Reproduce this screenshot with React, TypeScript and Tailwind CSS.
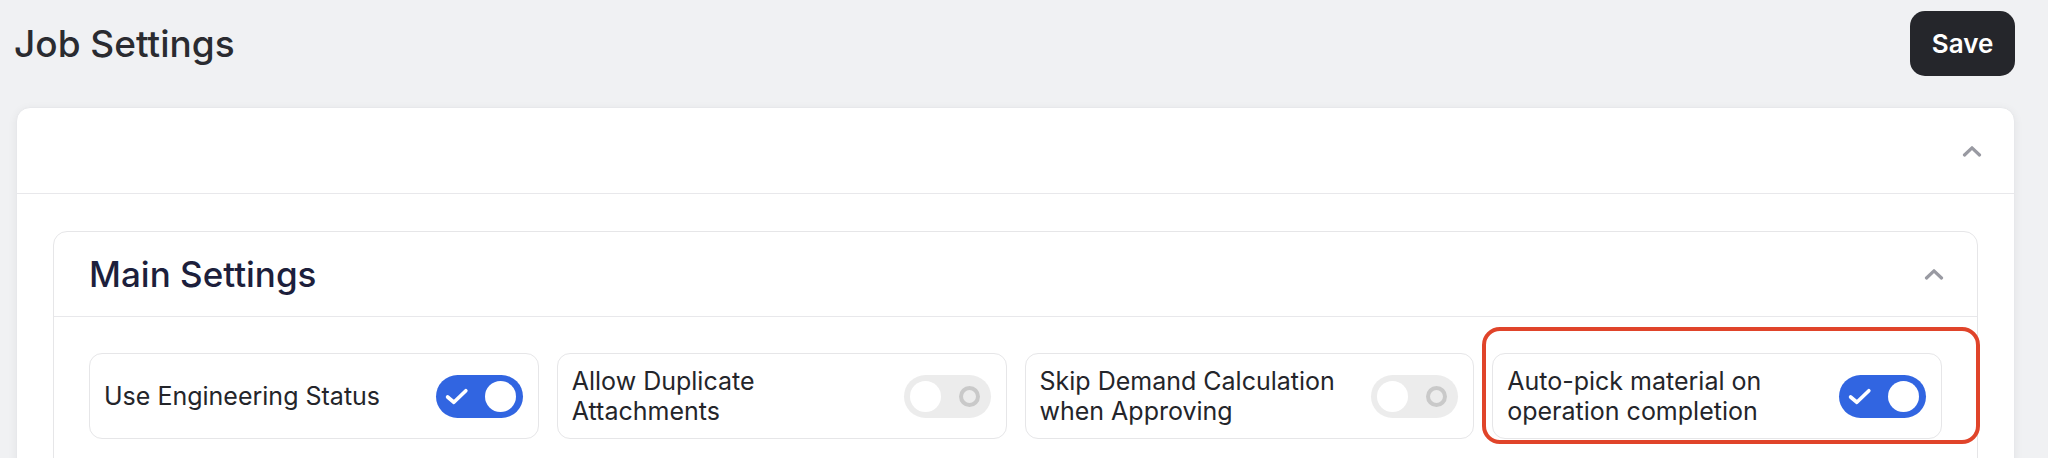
import React from 'react';

interface SettingToggle {
  label: string;
  enabled: boolean;
  highlighted?: boolean;
}

const settings: SettingToggle[] = [
  { label: 'Use Engineering Status', enabled: true },
  { label: 'Allow Duplicate Attachments', enabled: false },
  { label: 'Skip Demand Calculation when Approving', enabled: false },
  { label: 'Auto-pick material on operation completion', enabled: true, highlighted: true },
];

const ChevronUp: React.FC<{ className?: string }> = ({ className }) => (
  <svg viewBox="0 0 20 12" className={className} fill="none">
    <path d="M2.5 10 L10 2.8 L17.5 10" stroke="currentColor" strokeWidth="3.2" strokeLinecap="round" strokeLinejoin="round" />
  </svg>
);

const Switch: React.FC<{ on: boolean }> = ({ on }) => {
  if (on) {
    return (
      <div className="relative w-[87px] h-[43px] shrink-0 rounded-full bg-[#3165e1]">
        <svg viewBox="0 0 24 16" className="absolute left-[9px] top-[13px] w-[25px] h-[17px]" fill="none">
          <path d="M2.5 8.5 L8.5 13.5 L20 2.5" stroke="white" strokeWidth="3.5" strokeLinecap="round" strokeLinejoin="round" />
        </svg>
        <div className="absolute right-[7px] top-[6px] w-[31px] h-[31px] rounded-full bg-white" />
      </div>
    );
  }
  return (
    <div className="relative w-[87px] h-[43px] shrink-0 rounded-full bg-[#ececec]">
      <div className="absolute left-[6px] top-[6px] w-[31px] h-[31px] rounded-full bg-white" />
      <div className="absolute right-[11px] top-[11px] w-[21px] h-[21px] rounded-full border-[4px] border-[#c9c9c9]" />
    </div>
  );
};

const SettingCard: React.FC<{ item: SettingToggle }> = ({ item }) => (
  <div className="relative">
    <div className="h-[86px] bg-white border border-[#e6e6e8] rounded-[13px] pl-[14px] pr-[15px] flex items-center justify-between gap-4">
      <span className="text-[25px] leading-[30px] text-[#24252a] max-w-[300px]">{item.label}</span>
      <Switch on={item.enabled} />
    </div>
    {item.highlighted && (
      <div className="absolute -left-[10px] -top-[26px] -right-[38px] -bottom-[5px] border-[4px] border-[#e0442a] rounded-[18px] pointer-events-none" />
    )}
  </div>
);

export default function App() {
  return (
    <div
      className="min-h-[458px] bg-[#f0f1f3] pl-4 pr-[33px] pt-[11px] overflow-hidden"
      style={{ fontFamily: 'Inter, "Noto Sans", sans-serif' }}
    >
      <div className="flex items-center justify-between h-[65px]">
        <h1 className="text-[37px] font-medium text-[#2a2b30] -ml-[2px]">Job Settings</h1>
        <button className="h-[65px] w-[105px] rounded-[15px] bg-[#25262b] text-white text-[26px] font-semibold">
          Save
        </button>
      </div>

      <div className="mt-[31px] bg-white rounded-[14px] border border-[#e7e8eb] shadow-[0_2px_10px_rgba(0,0,0,0.06)]">
        <div className="h-[86px] flex items-center justify-end pr-[32px] border-b border-[#e8e8eb]">
          <ChevronUp className="w-[20px] h-[12px] text-[#999aa2]" />
        </div>
        <div className="px-[36px] pt-[37px]">
          <div className="bg-white rounded-[14px] border border-[#e6e6e8]">
            <div className="h-[85px] flex items-center justify-between pl-[35px] pr-[33px] border-b border-[#e8e8eb]">
              <h2 className="text-[35px] font-medium text-[#1d1f3c]">Main Settings</h2>
              <ChevronUp className="w-[20px] h-[12px] text-[#999aa2]" />
            </div>
            <div className="px-[35px] pt-[36px] pb-[36px] grid grid-cols-4 gap-[18px]">
              {settings.map((s) => (
                <SettingCard key={s.label} item={s} />
              ))}
            </div>
          </div>
        </div>
      </div>
    </div>
  );
}
